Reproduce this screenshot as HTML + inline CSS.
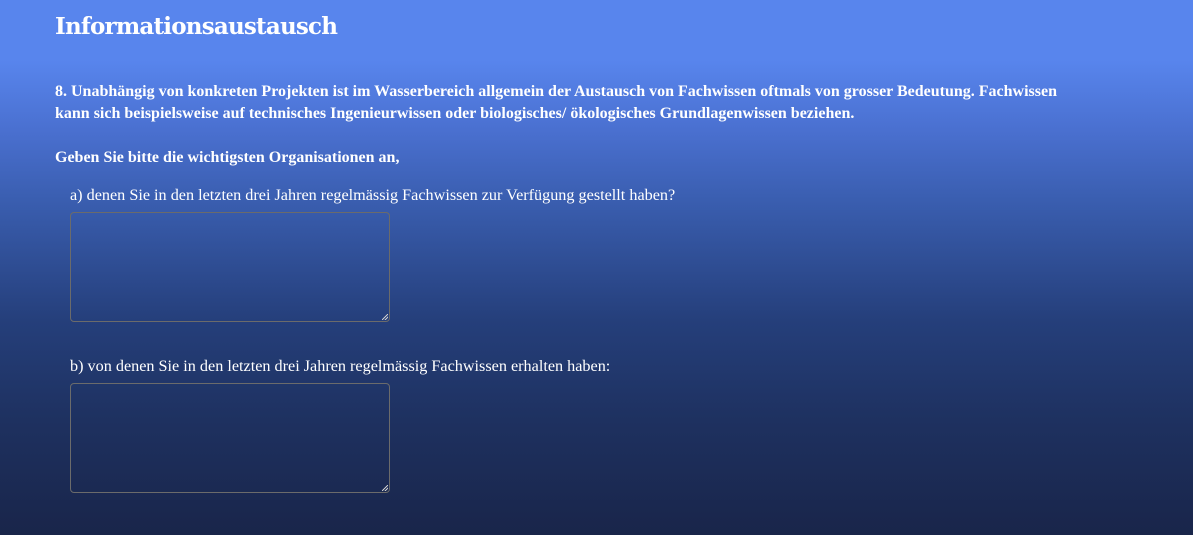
<!DOCTYPE html>
<html><head><meta charset="utf-8"><style>
html,body{margin:0;padding:0;}
body{width:1193px;height:535px;overflow:hidden;background:linear-gradient(to bottom,#5885ed 0px,#5885ed 60px,#4a70d0 130px,#3a5eb0 200px,#253f7b 320px,#1e3160 420px,#19254a 535px);font-family:"Liberation Serif",serif;color:#fff;position:relative;}
h1{position:absolute;left:55px;top:13px;margin:0;font-family:"DejaVu Serif","Liberation Serif",serif;font-weight:bold;font-size:23px;letter-spacing:-0.8px;}
.p{position:absolute;left:55px;font-weight:bold;font-size:16px;line-height:22px;width:1030px;}
.q{position:absolute;left:70px;font-size:16.2px;}
.ta{position:absolute;left:70px;width:318px;height:108px;border:1px solid #6b6b6b;border-radius:4px;}
.ta:after{content:"";position:absolute;right:1px;bottom:1px;width:6px;height:6px;background:linear-gradient(135deg,transparent 45%,#ccc 45%,#ccc 55%,transparent 55%,transparent 70%,#ccc 70%,#ccc 80%,transparent 80%);}
</style></head><body>
<h1>Informationsaustausch</h1>
<div class="p" style="top:81px">8. Unabhängig von konkreten Projekten ist im Wasserbereich allgemein der Austausch von Fachwissen oftmals von grosser Bedeutung. Fachwissen kann sich beispielsweise auf technisches Ingenieurwissen oder biologisches/ ökologisches Grundlagenwissen beziehen.</div>
<div class="p" style="top:147px">Geben Sie bitte die wichtigsten Organisationen an,</div>
<div class="q" style="top:186px">a) denen Sie in den letzten drei Jahren regelmässig Fachwissen zur Verfügung gestellt haben?</div>
<div class="ta" style="top:212px"></div>
<div class="q" style="top:357px">b) von denen Sie in den letzten drei Jahren regelmässig Fachwissen erhalten haben:</div>
<div class="ta" style="top:383px"></div>
</body></html>
